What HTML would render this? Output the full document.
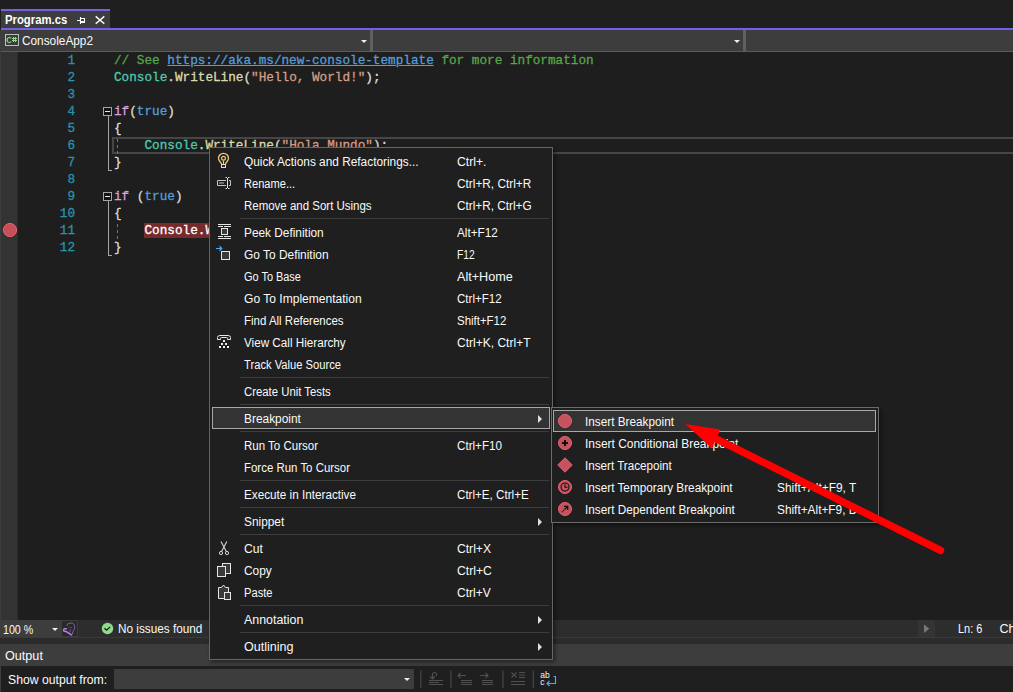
<!DOCTYPE html>
<html><head><meta charset="utf-8">
<style>
html,body{margin:0;padding:0;}
body{width:1013px;height:692px;overflow:hidden;background:#1f1f1f;position:relative;font-family:"Liberation Sans",sans-serif;font-size:12.5px;color:#fafafa;}
.abs{position:absolute;}
#tab{left:1px;top:9px;width:109px;height:19px;background:#3d3d3d;border-top:2px solid #7160e8;box-sizing:border-box;}
#tabt{position:absolute;left:4px;top:0.5px;line-height:17px;font-weight:bold;font-size:12.5px;color:#fff}
#tabline{left:1px;top:28px;width:1012px;height:2px;background:#7160e8;}
#nav{left:0;top:30px;width:1013px;height:21px;background:#3d3d3d;}
#navb{left:0;top:51px;width:1013px;height:1px;background:#5a5a5a;}
#gutter0{left:0;top:30px;width:1px;height:590px;background:#3d3d3d;}
#gutter{left:1px;top:52px;width:16px;height:568px;background:#333;}
#gutter1{left:17px;top:52px;width:1px;height:568px;background:#2a2a2a;}
#editor{left:18px;top:52px;width:995px;height:568px;background:#1e1e1e;}
.tri{width:0;height:0;border-left:3.3px solid transparent;border-right:3.3px solid transparent;border-top:3.5px solid #f0f0f0;}
.ln{-webkit-text-stroke:0.3px;position:absolute;left:30px;width:45px;text-align:right;color:#2b91af;font-family:"Liberation Mono",monospace;font-size:12.695px;line-height:17px;height:17px;white-space:pre;}
.cl{-webkit-text-stroke:0.3px;position:absolute;left:114px;color:#dcdcdc;font-family:"Liberation Mono",monospace;font-size:12.695px;line-height:17px;height:17px;white-space:pre;}
.c{color:#57a64a}.u{color:#569cd6;text-decoration:underline}.t{color:#4ec9b0}.m{color:#dcdcaa}.s{color:#d69d85}.k{color:#d8a0df}.b{color:#569cd6}
.bp{background:#772a2c;color:#fff}
#menu{left:209px;top:147px;width:344px;height:513px;background:#1f1f1f;border:1px solid #666;box-shadow:2px 2px 4px rgba(0,0,0,0.45);box-sizing:border-box;}
.mi{position:absolute;left:2px;width:338px;height:22px;line-height:22px;box-sizing:border-box;}
.mi .l{position:absolute;left:32px;top:1px}
.mi .r{position:absolute;left:245px;top:1px}
.mi .arr{position:absolute;left:326px;top:7.5px;width:0;height:0;border-top:4px solid transparent;border-bottom:4px solid transparent;border-left:4px solid #e0e0e0;}
.hl{background:#333;outline:1px solid #a8a8a8;outline-offset:-1px;}
.sep{position:absolute;left:30px;width:309px;height:1px;background:#3d3d3d;}
#sub{left:551px;top:407px;width:328px;height:116px;background:#1f1f1f;border:1px solid #6c6c6c;box-shadow:2px 2px 4px rgba(0,0,0,0.45);box-sizing:border-box;}
.si{position:absolute;left:1px;width:323px;height:22px;line-height:22px;}
.si .l{position:absolute;left:32px;top:1px}
.si .r{position:absolute;left:224px;top:1px}
.bt{height:18px;line-height:18px;font-size:12.5px;margin-top:1px}

</style></head><body>
<div class="abs" id="tab"><span class="" id="tabt" style="display:inline-block;transform-origin:0 50%;transform:scaleX(0.9058);">Program.cs</span></div>
<div class="abs" id="tabline"></div>
<div class="abs" id="nav"></div><div class="abs" id="navb"></div>
<div class="abs" id="gutter0"></div><div class="abs" id="gutter"></div><div class="abs" id="gutter1"></div><div class="abs" id="editor"></div>
<svg class="abs" style="left:76px;top:13px" width="34" height="12" viewBox="0 0 34 12"><path d="M1 7.500H4.500 M4.500 4V11 M5 5.500H8.500V8.500" stroke="#fff" stroke-width="1.100" fill="none"/><rect x="5" y="8" width="4" height="2" fill="#fff"/><path d="M19.700 3.400l8.600 7.400M28.300 3.400l-8.600 7.400" stroke="#fff" stroke-width="1.400" fill="none"/></svg>
<div class="abs" style="left:5px;top:34px;width:14px;height:12px;border:1px solid #bdbdbd;box-sizing:border-box;"></div>
<svg class="abs" style="left:5px;top:34px" width="14" height="12" viewBox="5 34 14 12" fill="none" stroke="#8fdc8f"><path d="M11.200 38.400A2.300 2.500 0 1 0 11.200 41.500" stroke-width="1.100"/><path d="M13.500 37.200V42M15.500 37.200V42M12 38.500H17M12 40.500H17" stroke-width="1" shape-rendering="crispEdges"/></svg>
<div class="abs" style="left:22px;top:31px;height:20px;line-height:20px;color:#fafafa;"><span class="" id="navt" style="display:inline-block;transform-origin:0 50%;transform:scaleX(0.9459);">ConsoleApp2</span></div>
<div class="abs" style="left:370px;top:30px;width:3px;height:22px;background:#606060"></div>
<div class="abs" style="left:743px;top:30px;width:3px;height:22px;background:#606060"></div>
<div class="abs tri" style="left:360.500px;top:40px"></div>
<div class="abs tri" style="left:733.500px;top:40px"></div>
<div class="abs" style="left:112px;top:137px;width:901px;height:17px;border:2px solid #464646;border-right:none;box-sizing:border-box;"></div>
<div class="ln" style="top:52px">1</div>
<div class="cl" style="top:52px"><span class="c">// See </span><span class="u">https://aka.ms/new-console-template</span><span class="c"> for more information</span></div>
<div class="ln" style="top:69px">2</div>
<div class="cl" style="top:69px"><span class="t">Console</span>.<span class="m">WriteLine</span>(<span class="s">"Hello, World!"</span>);</div>
<div class="ln" style="top:86px">3</div>
<div class="ln" style="top:103px">4</div>
<div class="cl" style="top:103px"><span class="k">if</span>(<span class="b">true</span>)</div>
<div class="ln" style="top:120px">5</div>
<div class="cl" style="top:120px">{</div>
<div class="ln" style="top:137px">6</div>
<div class="cl" style="top:137px">    <span class="t">Console</span>.<span class="m">WriteLine</span>(<span class="s">"Hola Mundo"</span>);</div>
<div class="ln" style="top:154px">7</div>
<div class="cl" style="top:154px">}</div>
<div class="ln" style="top:171px">8</div>
<div class="ln" style="top:188px">9</div>
<div class="cl" style="top:188px"><span class="k">if</span> (<span class="b">true</span>)</div>
<div class="ln" style="top:205px">10</div>
<div class="cl" style="top:205px">{</div>
<div class="ln" style="top:222px">11</div>
<div class="cl" style="top:222px">    <span class="bp">Console.WriteLine("Hola Mundo");</span></div>
<div class="ln" style="top:239px">12</div>
<div class="cl" style="top:239px">}</div>
<div class="abs" style="left:103px;top:107px;width:9px;height:9px;border:1px solid #a5a5a5;box-sizing:border-box;background:#121212"></div>
<div class="abs" style="left:105px;top:110.5px;width:5px;height:1.600px;background:#e8e8e8"></div>
<div class="abs" style="left:108px;top:116px;width:1px;height:55px;background:#a5a5a5"></div>
<div class="abs" style="left:108px;top:170px;width:4px;height:1px;background:#a5a5a5"></div>
<div class="abs" style="left:117px;top:138px;width:1px;height:16px;background:repeating-linear-gradient(to bottom,#777 0,#777 3px,transparent 3px,transparent 6px);background-position:0 1px"></div>
<div class="abs" style="left:103px;top:192px;width:9px;height:9px;border:1px solid #a5a5a5;box-sizing:border-box;background:#121212"></div>
<div class="abs" style="left:105px;top:195.5px;width:5px;height:1.600px;background:#e8e8e8"></div>
<div class="abs" style="left:108px;top:201px;width:1px;height:55px;background:#a5a5a5"></div>
<div class="abs" style="left:108px;top:255px;width:4px;height:1px;background:#a5a5a5"></div>
<div class="abs" style="left:117px;top:223px;width:1px;height:16px;background:repeating-linear-gradient(to bottom,#777 0,#777 3px,transparent 3px,transparent 6px);background-position:0 1px"></div>
<svg class="abs" style="left:0;top:220px" width="20" height="20" viewBox="0 0 20 20"><circle cx="10" cy="10" r="6.600" fill="#c4505c" stroke="#ee5e6c" stroke-width="1"/></svg>
<div class="abs" style="left:0;top:620px;width:1013px;height:17px;background:#2d2d2d"></div>
<div class="abs" style="left:0;top:620px;width:61px;height:17px;background:#3d3d3d"></div>
<div class="abs" style="left:61px;top:620px;width:17px;height:17px;background:#292929;border:1px solid #3d3d3d;box-sizing:border-box"></div>
<div class="abs" style="left:918px;top:620px;width:17px;height:17px;background:#343434"></div>
<div class="abs" style="left:0;top:637px;width:1013px;height:1px;background:#3a3a3a"></div>
<div class="abs" style="left:0;top:638px;width:1013px;height:6px;background:#2b2b2b"></div>
<div class="abs" style="left:0;top:644px;width:1013px;height:22px;background:#3d3d3d"></div>
<div class="abs" style="left:0;top:666px;width:1013px;height:26px;background:#1f1f1f"></div>
<div class="abs" style="left:0;top:666px;width:1px;height:26px;background:#3d3d3d"></div>
<div class="abs bt" style="left:3.200px;top:620px;"><span class="" id="zoomt" style="display:inline-block;transform-origin:0 50%;transform:scaleX(0.8522);">100 %</span></div>
<div class="abs tri" style="left:51.500px;top:628px"></div>
<div class="abs bt" style="left:118px;top:619px;"><span class="" id="noiss" style="display:inline-block;transform-origin:0 50%;transform:scaleX(0.9404);">No issues found</span></div>
<div class="abs bt" style="left:957.500px;top:619px;"><span class="" id="lnt" style="display:inline-block;transform-origin:0 50%;transform:scaleX(0.8737);">Ln: 6</span></div>
<div class="abs bt" style="left:999.500px;top:619px;">Ch</div>
<div class="abs" style="left:5px;top:645px;height:22px;line-height:22px;font-size:12.5px"><span class="" id="outt" style="display:inline-block;transform-origin:0 50%;transform:scaleX(1.0098);">Output</span></div>
<div class="abs" style="left:8px;top:669px;height:22px;line-height:22px;font-size:12.5px"><span class="" id="showt" style="display:inline-block;transform-origin:0 50%;transform:scaleX(0.9778);">Show output from:</span></div>
<div class="abs" style="left:114px;top:669px;width:300px;height:20px;background:#3d3d3d"></div>
<div class="abs tri" style="left:403.700px;top:678px"></div>
<svg class="abs" style="left:0;top:612px" width="1013" height="80" viewBox="0 612 1013 80" fill="none">
<!-- scroll arrow -->
<path d="M924 624.500V633L929.300 628.700Z" fill="#787878"/>
<!-- purple head/wrench icon -->
<path d="M66.500 625.800Q67.500 622.900 70.800 622.900Q74.900 623.300 74.700 627.300Q74.600 629.600 73.100 631.400L72 634.700" stroke="#8a5fb8" stroke-width="1"/>
<path d="M68.600 627.500h0.900M70.800 627.500h0.900" stroke="#8a5fb8" stroke-width="0.900"/>
<path d="M70.200 629.300V632.500" stroke="#7a52a6" stroke-width="1"/>
<path d="M66.300 628.700H64.600Q63.500 628.900 63.700 630.400Q64.200 631.900 66 631.300L71.300 634.900" stroke="#b582dc" stroke-width="1.600" stroke-linejoin="round" stroke-linecap="round"/>
<!-- green check -->
<circle cx="107.500" cy="628.500" r="5.700" fill="#8fdc8c"/>
<path d="M104.500 628.300L106.600 630.200L110.100 626.900" stroke="#111" stroke-width="1.250"/>
<!-- toolbar separators -->
<g stroke="#464646" stroke-width="1.200"><path d="M420.800 670.500V688 M451 670.500V688 M503 670.500V688 M533.300 670.500V688"/></g>
<g stroke="#505050" stroke-width="1.200" >
<!-- icon1 -->
<path d="M432.500 678.500V674.500Q432.500 672.500 434.500 672.500Q436.500 672.500 436.500 674.500V676 M430 676.500L432.500 679L435 676.500 M429 680.500H443 M429 682.500H439 M429 684.500H443"/>
<!-- icon2 -->
<path d="M458 675.500H466 M460.500 673L458 675.500L460.500 678 M461 680.500H472 M461 682.500H472 M461 684.500H472"/>
<!-- icon3 -->
<path d="M480 675.500H488 M485.500 673L488 675.500L485.500 678 M482 680.500H493 M482 682.500H493 M482 684.500H493"/>
<!-- icon4 -->
<path d="M511.500 672.500L516.500 677.500 M516.500 672.500L511.500 677.500 M519 672.500H525 M519 675H525 M519 677.500H525 M511 681.500H525 M511 684.500H525"/>
</g>
<!-- icon5 -->
<g font-family="Liberation Sans, sans-serif" font-size="8.500" fill="#f4f4f4"><text x="540.300" y="678">ab</text><text x="540.300" y="685">c</text></g>
<path d="M553.500 676.500H555.500V683.500H547 M549.500 681L547 683.500L549.500 686" stroke="#4fa8f5" stroke-width="1.200"/>
</svg>
<div class="abs" id="menu">
<div class="mi" style="top:2px"><span class="l" id="ml161" style="display:inline-block;transform-origin:0 50%;transform:scaleX(0.9483);">Quick Actions and Refactorings...</span><span class="r" id="mr161" style="display:inline-block;transform-origin:0 50%;transform:scaleX(0.9729);">Ctrl+.</span></div>
<div class="mi" style="top:24px"><span class="l" id="ml183" style="display:inline-block;transform-origin:0 50%;transform:scaleX(0.8878);">Rename...</span><span class="r" id="mr183" style="display:inline-block;transform-origin:0 50%;transform:scaleX(0.9454);">Ctrl+R, Ctrl+R</span></div>
<div class="mi" style="top:46px"><span class="l" id="ml205" style="display:inline-block;transform-origin:0 50%;transform:scaleX(0.9183);">Remove and Sort Usings</span><span class="r" id="mr205" style="display:inline-block;transform-origin:0 50%;transform:scaleX(0.9421);">Ctrl+R, Ctrl+G</span></div>
<div class="mi" style="top:73px"><span class="l" id="ml232" style="display:inline-block;transform-origin:0 50%;transform:scaleX(0.9479);">Peek Definition</span><span class="r" id="mr232" style="display:inline-block;transform-origin:0 50%;transform:scaleX(0.9393);">Alt+F12</span></div>
<div class="mi" style="top:95px"><span class="l" id="ml254" style="display:inline-block;transform-origin:0 50%;transform:scaleX(0.9536);">Go To Definition</span><span class="r" id="mr254" style="display:inline-block;transform-origin:0 50%;transform:scaleX(0.8215);">F12</span></div>
<div class="mi" style="top:117px"><span class="l" id="ml276" style="display:inline-block;transform-origin:0 50%;transform:scaleX(0.8741);">Go To Base</span><span class="r" id="mr276" style="display:inline-block;transform-origin:0 50%;transform:scaleX(1.0084);">Alt+Home</span></div>
<div class="mi" style="top:139px"><span class="l" id="ml298" style="display:inline-block;transform-origin:0 50%;transform:scaleX(0.9643);">Go To Implementation</span><span class="r" id="mr298" style="display:inline-block;transform-origin:0 50%;transform:scaleX(0.9258);">Ctrl+F12</span></div>
<div class="mi" style="top:161px"><span class="l" id="ml320" style="display:inline-block;transform-origin:0 50%;transform:scaleX(0.9189);">Find All References</span><span class="r" id="mr320" style="display:inline-block;transform-origin:0 50%;transform:scaleX(0.9153);">Shift+F12</span></div>
<div class="mi" style="top:183px"><span class="l" id="ml342" style="display:inline-block;transform-origin:0 50%;transform:scaleX(0.9344);">View Call Hierarchy</span><span class="r" id="mr342" style="display:inline-block;transform-origin:0 50%;transform:scaleX(0.9620);">Ctrl+K, Ctrl+T</span></div>
<div class="mi" style="top:205px"><span class="l" id="ml364" style="display:inline-block;transform-origin:0 50%;transform:scaleX(0.8958);">Track Value Source</span></div>
<div class="mi" style="top:232px"><span class="l" id="ml391" style="display:inline-block;transform-origin:0 50%;transform:scaleX(0.9074);">Create Unit Tests</span></div>
<div class="mi hl" style="top:259px"><span class="l" id="ml418" style="display:inline-block;transform-origin:0 50%;transform:scaleX(0.9521);">Breakpoint</span><span class="arr"></span></div>
<div class="mi" style="top:286px"><span class="l" id="ml445" style="display:inline-block;transform-origin:0 50%;transform:scaleX(0.9209);">Run To Cursor</span><span class="r" id="mr445" style="display:inline-block;transform-origin:0 50%;transform:scaleX(0.9320);">Ctrl+F10</span></div>
<div class="mi" style="top:308px"><span class="l" id="ml467" style="display:inline-block;transform-origin:0 50%;transform:scaleX(0.9154);">Force Run To Cursor</span></div>
<div class="mi" style="top:335px"><span class="l" id="ml494" style="display:inline-block;transform-origin:0 50%;transform:scaleX(0.9371);">Execute in Interactive</span><span class="r" id="mr494" style="display:inline-block;transform-origin:0 50%;transform:scaleX(0.9298);">Ctrl+E, Ctrl+E</span></div>
<div class="mi" style="top:362px"><span class="l" id="ml521" style="display:inline-block;transform-origin:0 50%;transform:scaleX(0.9480);">Snippet</span><span class="arr"></span></div>
<div class="mi" style="top:389px"><span class="l" id="ml548" style="display:inline-block;transform-origin:0 50%;transform:scaleX(0.9716);">Cut</span><span class="r" id="mr548" style="display:inline-block;transform-origin:0 50%;transform:scaleX(0.9693);">Ctrl+X</span></div>
<div class="mi" style="top:411px"><span class="l" id="ml570" style="display:inline-block;transform-origin:0 50%;transform:scaleX(0.9525);">Copy</span><span class="r" id="mr570" style="display:inline-block;transform-origin:0 50%;transform:scaleX(0.9726);">Ctrl+C</span></div>
<div class="mi" style="top:433px"><span class="l" id="ml592" style="display:inline-block;transform-origin:0 50%;transform:scaleX(0.8915);">Paste</span><span class="r" id="mr592" style="display:inline-block;transform-origin:0 50%;transform:scaleX(0.9607);">Ctrl+V</span></div>
<div class="mi" style="top:460px"><span class="l" id="ml619" style="display:inline-block;transform-origin:0 50%;transform:scaleX(0.9936);">Annotation</span><span class="arr"></span></div>
<div class="mi" style="top:487px"><span class="l" id="ml646" style="display:inline-block;transform-origin:0 50%;transform:scaleX(1.0032);">Outlining</span><span class="arr"></span></div>
<div class="sep" style="top:70px"></div>
<div class="sep" style="top:229px"></div>
<div class="sep" style="top:256px"></div>
<div class="sep" style="top:283px"></div>
<div class="sep" style="top:332px"></div>
<div class="sep" style="top:359px"></div>
<div class="sep" style="top:386px"></div>
<div class="sep" style="top:457px"></div>
<div class="sep" style="top:484px"></div>
</div>
<div class="abs" id="sub">
<div class="si hl" style="top:2px"><span class="l" id="sl421" style="display:inline-block;transform-origin:0 50%;transform:scaleX(0.9418);">Insert Breakpoint</span></div>
<div class="si" style="top:24px"><span class="l" id="sl443" style="display:inline-block;transform-origin:0 50%;transform:scaleX(0.9550);">Insert Conditional Breakpoint</span></div>
<div class="si" style="top:46px"><span class="l" id="sl465" style="display:inline-block;transform-origin:0 50%;transform:scaleX(0.9322);">Insert Tracepoint</span></div>
<div class="si" style="top:68px"><span class="l" id="sl487" style="display:inline-block;transform-origin:0 50%;transform:scaleX(0.9413);">Insert Temporary Breakpoint</span><span class="r" id="sr487" style="display:inline-block;transform-origin:0 50%;transform:scaleX(0.9536);">Shift+Alt+F9, T</span></div>
<div class="si" style="top:90px"><span class="l" id="sl509" style="display:inline-block;transform-origin:0 50%;transform:scaleX(0.9407);">Insert Dependent Breakpoint</span><span class="r" id="sr509" style="display:inline-block;transform-origin:0 50%;transform:scaleX(0.9473);">Shift+Alt+F9, D</span></div>
</div>
<svg class="abs" style="left:0;top:0" width="1013" height="692" viewBox="0 0 1013 692" fill="none">
<!-- lightbulb -->
<path d="M221.500 164.200C221.500 162.300 218.500 161.300 218.500 158.300A5 5 0 1 1 228.500 158.300C228.500 161.300 225.500 162.300 225.500 164.200" stroke="#eecb7c" stroke-width="1.300"/>
<circle cx="223.5" cy="158.3" r="1.9" stroke="#eecb7c" stroke-width="1.200"/>
<path d="M223.5 160.5V164" stroke="#eecb7c" stroke-width="1.200"/>
<rect x="221.5" y="164.5" width="4" height="3" stroke="#d8d8d8" stroke-width="1" fill="#2a2a2a"/>
<!-- rename -->
<path d="M226 180.5H217.5V185.500H226" stroke="#c4c4c4" stroke-width="1"/>
<rect x="219" y="182.300" width="5" height="1.400" fill="#8c8c8c"/>
<path d="M225.500 177.500H227 M228 177.500H229.500 M225.500 188.500H227 M228 188.500H229.500 M227.500 178V188" stroke="#e0e0e0" stroke-width="1"/>
<path d="M229 180.500H230.500V185.500H229" stroke="#c4c4c4" stroke-width="1"/>
<!-- peek definition -->
<g shape-rendering="crispEdges" stroke="#e6e6e6" stroke-width="1">
<path d="M218 224.500H231 M218 226.500H223 M224 226.500H231 M218 236.500H223 M224 236.500H231 M218 238.500H231"/>
<rect x="221.500" y="228.500" width="6" height="6" fill="#3a3a3a"/>
<!-- goto def box -->
<rect x="221.500" y="251.500" width="8" height="8" fill="#3a3a3a"/>
</g>
<path d="M216 248.500H221.500 M219.500 246.300L221.800 248.500L219.500 250.700" stroke="#4fa8f5" stroke-width="1.200"/>
<!-- call hierarchy -->
<path d="M217.500 339.500V337.500Q217.500 335.500 220 335.500H228Q230.500 335.500 230.500 337.500V339.500H227.500V338.200Q227.500 337.500 226.500 337.500H221.500Q220.500 337.500 220.500 338.200V339.500Z" stroke="#e6e6e6" stroke-width="1"/>
<g fill="#ececec" shape-rendering="crispEdges">
<rect x="223" y="340" width="2" height="2"/><rect x="221" y="343" width="2" height="2"/><rect x="225" y="343" width="2" height="2"/>
<rect x="219" y="346" width="2" height="2"/><rect x="223" y="346" width="2" height="2"/><rect x="227" y="346" width="2" height="2"/>
</g>
<!-- cut -->
<path d="M221 541.500L226.300 551.500 M226.800 541.500L221.600 551.500" stroke="#d8d8d8" stroke-width="1.100"/>
<circle cx="221" cy="553" r="1.600" stroke="#d8d8d8" stroke-width="1"/>
<circle cx="227" cy="553" r="1.600" stroke="#d8d8d8" stroke-width="1"/>
<!-- copy -->
<g shape-rendering="crispEdges" stroke="#e6e6e6" stroke-width="1" fill="#3a3a3a">
<rect x="222.500" y="563.500" width="8" height="10"/>
<rect x="217.500" y="566.500" width="8" height="10"/>
</g>
<!-- paste -->
<path d="M224 598.500H218.500V587.500H221.500L223.500 585L225.500 587.500H228.500V592" stroke="#e6e6e6" stroke-width="1" fill="#3a3a3a"/>
<rect x="224.500" y="592.500" width="6" height="7" stroke="#e6e6e6" stroke-width="1" fill="#3a3a3a" shape-rendering="crispEdges"/>
<!-- breakpoint icons -->
<circle cx="565" cy="421" r="6.500" fill="#c5525e" stroke="#f0606e" stroke-width="1"/>
<circle cx="565" cy="443" r="6.500" fill="#c5525e" stroke="#f0606e" stroke-width="1"/>
<path d="M562 443H568M565 440V446" stroke="#111" stroke-width="2"/>
<path d="M565 457.800L572.200 465L565 472.200L557.800 465Z" fill="#c5525e" stroke="#f0606e" stroke-width="1"/>
<circle cx="565" cy="487" r="6.500" fill="#c5525e" stroke="#f0606e" stroke-width="1"/>
<circle cx="565" cy="487" r="4" stroke="#111" stroke-width="1.100"/>
<path d="M565 484.300V487.300H567.500" stroke="#111" stroke-width="1.100"/>
<circle cx="565" cy="509" r="6.500" fill="#c5525e" stroke="#f0606e" stroke-width="1"/>
<path d="M564 506.300H567.700V510 M567.500 506.500L564.500 509.500" stroke="#111" stroke-width="1.300"/>
<path d="M564 510L561.500 512.500" stroke="#111" stroke-width="1.200" stroke-dasharray="1 1"/>
</svg>
<svg class="abs" style="left:0;top:0" width="1013" height="692" viewBox="0 0 1013 692"><path d="M716 438.800L940.500 550.400" stroke="#ff0000" stroke-width="7.400" stroke-linecap="round" fill="none"/><path d="M685.200 423.900L720.400 429.500L711.800 448.200Z" fill="#ff0000"/></svg>
</body></html>
